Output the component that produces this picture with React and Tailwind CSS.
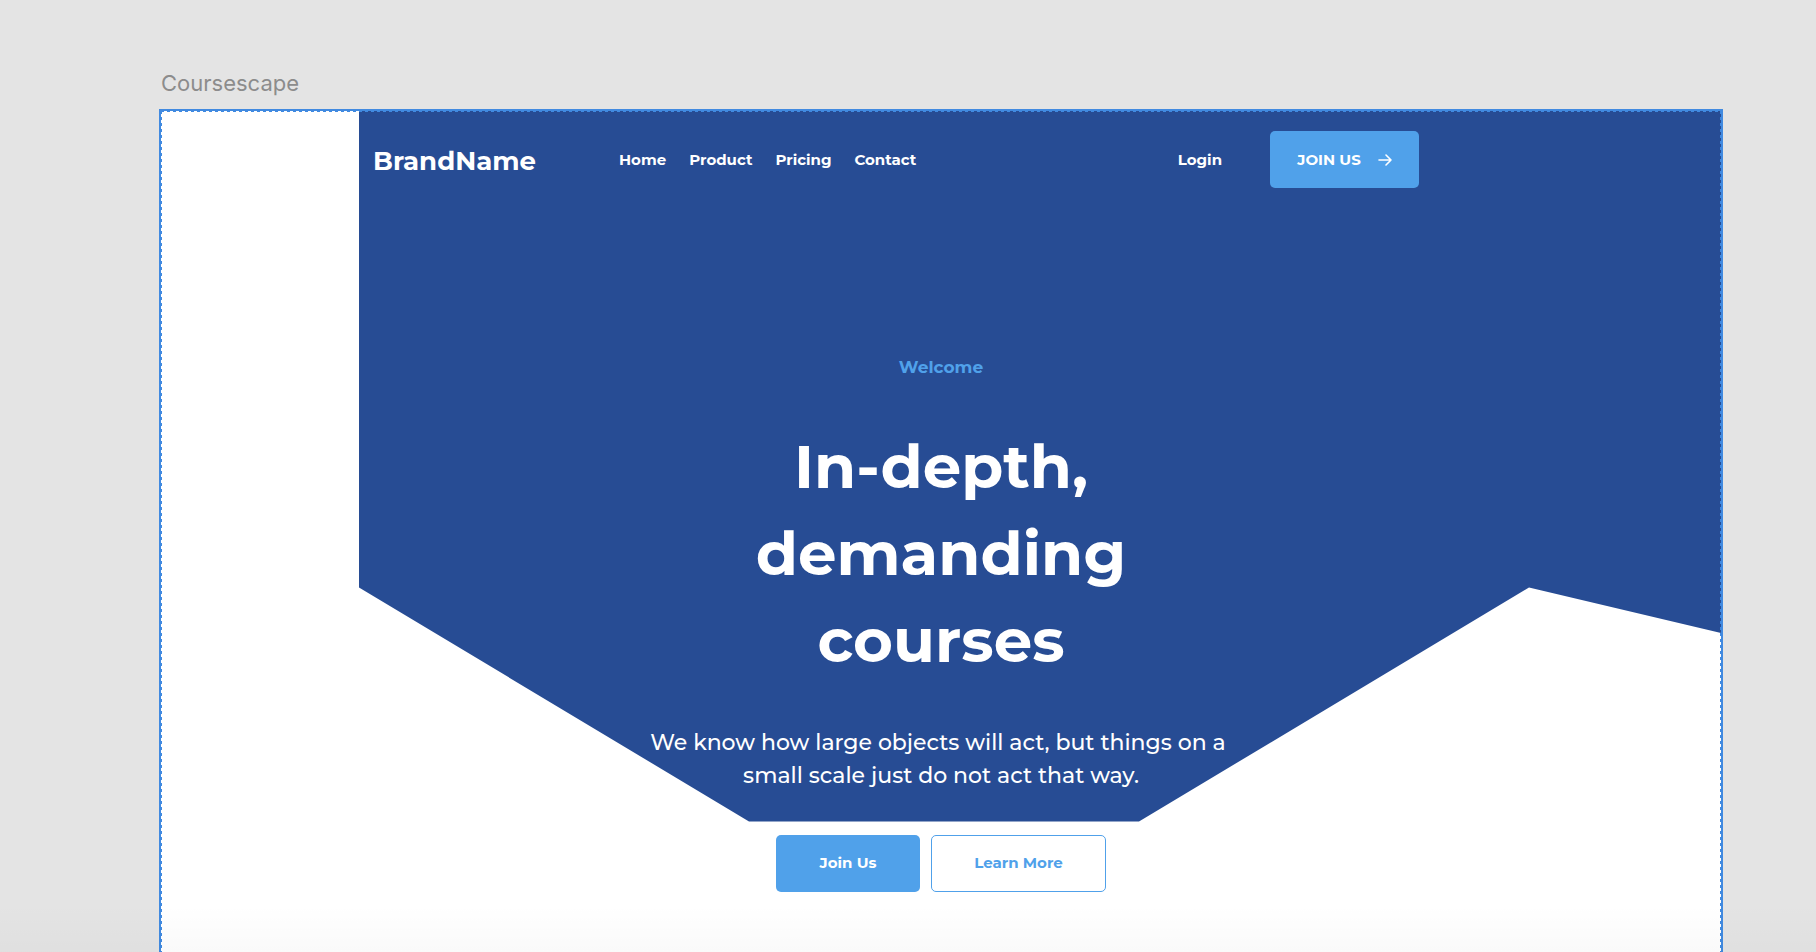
const links = ["Home", "Product", "Pricing", "Contact"];

function ArrowRight() {
  return (
    <svg
      aria-hidden="true"
      className="h-3 w-3.5"
      viewBox="0 0 14 12"
      fill="none"
      stroke="currentColor"
      strokeWidth="1.6"
      strokeLinecap="round"
      strokeLinejoin="round"
    >
      <path d="M1 6h12M8 1l5 5-5 5" />
    </svg>
  );
}

function Backdrop() {
  return (
    <svg
      aria-hidden="true"
      className="absolute top-0 left-0 h-[711px] w-full"
      viewBox="0 0 1560 711"
      preserveAspectRatio="none"
    >
      <polygon
        points="198,0 1560,0 1560,522 1368,476.5 978,710.5 588,710.5 198,476.5"
        fill="#274c94"
      />
    </svg>
  );
}

function DashedGuide() {
  return (
    <svg aria-hidden="true" className="pointer-events-none absolute inset-0 h-full w-full">
      <g stroke="#418ae0" strokeWidth="2" strokeDasharray="3 3">
        <line x1="0" y1="0" x2="100%" y2="0" />
        <line x1="0" y1="0" x2="0" y2="100%" />
        <line x1="100%" y1="0" x2="100%" y2="100%" />
      </g>
    </svg>
  );
}

function Header() {
  return (
    <header className="mx-auto flex w-full max-w-[1136px] items-center pt-5 text-white">
      <a href="#" className="w-[246px] pt-0.5 text-[26px] leading-9 font-bold">
        BrandName
      </a>
      <nav className="flex flex-1 gap-[23px] text-[15px] leading-6 font-bold">
        {links.map((link) => (
          <a key={link} href="#">
            {link}
          </a>
        ))}
      </nav>
      <div className="mr-[90px] flex items-center gap-12 text-[15px] leading-6 font-bold">
        <a href="#">Login</a>
        <button
          type="button"
          className="flex h-[57px] w-[149px] items-center justify-center gap-[17px] rounded-[5px] bg-[#50a1ea]"
        >
          JOIN US
          <ArrowRight />
        </button>
      </div>
    </header>
  );
}

function Hero() {
  return (
    <section className="flex flex-col items-center pt-[167px] text-center">
      <p className="text-[17px] leading-6 font-bold text-[#50a1ea]">Welcome</p>
      <h1 className="mt-11 max-w-[400px] text-[61px] leading-[87px] font-bold text-white">
        In-depth, demanding courses
      </h1>
      <p className="mt-[42px] max-w-[600px] text-[22px] leading-[33px] font-medium text-white">
        We know how large objects will act, but things on a&nbsp;
        <br />
        small scale just do not act that way.
      </p>
      <div className="mt-[43px] flex gap-[11px] text-[15px] font-bold">
        <button
          type="button"
          className="h-[57px] w-36 rounded-[5px] bg-[#50a1ea] text-white"
        >
          Join Us
        </button>
        <button
          type="button"
          className="h-[57px] w-[175px] rounded-[5px] border border-[#50a1ea] text-[#50a1ea]"
        >
          Learn More
        </button>
      </div>
    </section>
  );
}

export default function App() {
  return (
    <div className="relative flex min-h-screen flex-col bg-[#e4e4e4] pt-[67px] pr-[93px] pl-[159px] font-['Montserrat','Inter',sans-serif]">
      <h2 className="mb-2.5 px-0.5 font-['Inter',sans-serif] text-[22px] leading-8 text-[#8c8c8c]">
        Coursescape
      </h2>
      <main className="relative flex-1 border-x-2 border-t-2 border-[#418ae0] bg-white pb-12">
        <Backdrop />
        <div className="relative">
          <Header />
          <Hero />
        </div>
        <DashedGuide />
      </main>
      <div className="pointer-events-none absolute inset-x-0 bottom-0 h-12 bg-linear-to-b from-transparent to-black/2" />
    </div>
  );
}
